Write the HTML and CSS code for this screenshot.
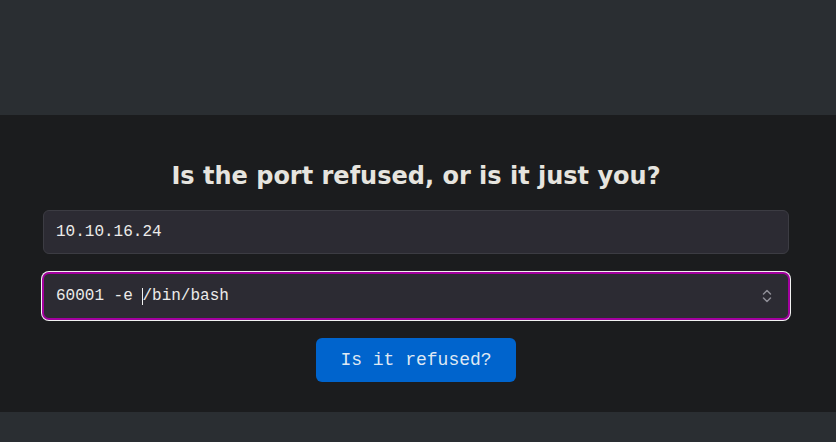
FILE: index.html
```html
<!DOCTYPE html>
<html lang="en">
<head>
<meta charset="utf-8">
<title>Is the port refused?</title>
<link rel="stylesheet" href="styles.css">
</head>
<body>
<div class="top"></div>
<main class="band">
  <div class="wrap">
    <h1 class="title">Is the port refused, or is it just you?</h1>
    <div class="field">10.10.16.24</div>
    <div class="field field-focus">
      <span class="val">60001 -e <span class="caret"></span>/bin/bash</span>
      <svg class="chev" width="10" height="14" viewBox="0 0 10 14" fill="none" stroke="#8e8d96" stroke-width="1.5" stroke-linecap="round" stroke-linejoin="round">
        <path d="M1.5 5 L5 1.5 L8.5 5"/>
        <path d="M1.5 9 L5 12.5 L8.5 9"/>
      </svg>
    </div>
    <div class="actions"><button class="btn">Is it refused?</button></div>
  </div>
</main>
<div class="bottom"></div>
</body>
</html>
```
FILE: styles.css
```css
html, body {
  margin: 0;
  padding: 0;
  background: #2a2e32;
  height: 100%;
}
.top { height: 115px; }
.band {
  background: #1b1c1e;
  height: 297px;
  box-sizing: border-box;
  padding-top: 46px;
}
.wrap {
  width: 746px;
  margin-left: 43px;
  display: flex;
  flex-direction: column;
  gap: 19px;
}
.title {
  margin: 0;
  text-align: center;
  font-family: "DejaVu Sans", sans-serif;
  font-weight: bold;
  font-size: 24px;
  line-height: 30px;
  color: #e6e4df;
}
.field {
  height: 44px;
  box-sizing: border-box;
  border: 1px solid #3c3c43;
  border-radius: 6px;
  background: #2c2b33;
  display: flex;
  align-items: center;
  justify-content: space-between;
  padding: 0 16px 0 12px;
  font-family: "Liberation Mono", monospace;
  font-size: 16px;
  color: #ecebea;
}
.field-focus {
  height: 46px;
  border-color: #a3009f;
  box-shadow: 0 0 0 1px #a3009f, 0 0 0 2px #f2f2f2;
}
.val { display: inline-flex; align-items: center; white-space: pre; }
.caret {
  display: inline-block;
  width: 1px;
  height: 17px;
  background: #f0f0f0;
  margin-right: -1px;
}
.chev { display: block; }
.actions { display: flex; justify-content: center; }
.btn {
  width: 200px;
  height: 44px;
  border: 0;
  border-radius: 6px;
  background: #0064cd;
  color: #dfe8f3;
  font-family: "Liberation Mono", monospace;
  font-size: 18px;
  cursor: pointer;
}
```
